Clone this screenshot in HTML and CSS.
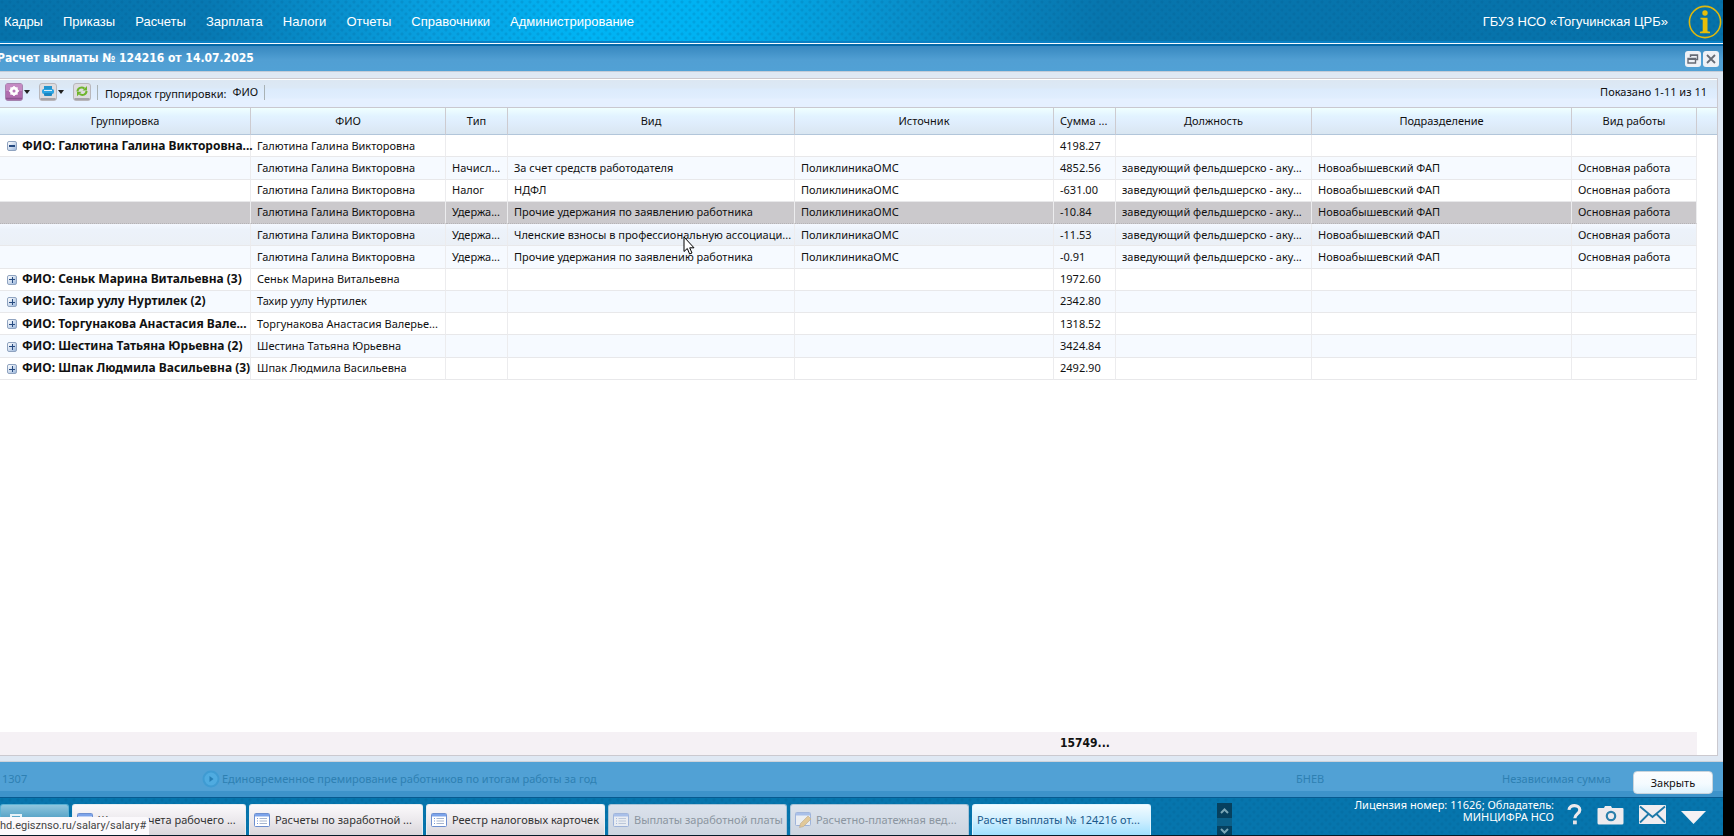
FILE: index.html
```html
<!DOCTYPE html>
<html lang="ru">
<head>
<meta charset="utf-8">
<title>Расчет выплаты</title>
<link rel="stylesheet" href="styles.css">
</head>
<body>
<div class="desktop">
  <header class="topbar">
    <nav class="menu">
      <a href="#">Кадры</a><a href="#">Приказы</a><a href="#">Расчеты</a><a href="#">Зарплата</a><a href="#">Налоги</a><a href="#">Отчеты</a><a href="#">Справочники</a><a href="#">Администрирование</a>
    </nav>
    <span class="org">ГБУЗ НСО «Тогучинская ЦРБ»</span>
    <button class="info" aria-label="Информация">
      <svg width="34" height="34" viewBox="0 0 34 34"><circle cx="17" cy="17" r="15.6" fill="none" stroke="#e0b80c" stroke-width="1.6"/><circle cx="17" cy="8" r="2.7" fill="#e8be08"/><path d="M12.5 12.8h7v13.4l2.5.6v1.4H12v-1.4l2.7-.6V14.7l-2.2-.5z" fill="#e8be08"/></svg>
    </button>
  </header>

  <section class="window">
    <div class="titlebar">
      <h1>Расчет выплаты № 124216 от 14.07.2025</h1>
      <button class="tool" aria-label="Восстановить"><svg width="16" height="16" viewBox="0 0 16 16" fill="none" stroke="#666b75" stroke-width="1.4"><path d="M5.5 6V4h7v4.500h-2M5 4.200h8"/><path d="M3 7.500h7.500v4.500H3zM3 8.200h7.500"/></svg></button>
      <button class="tool" aria-label="Закрыть окно"><svg width="16" height="16" viewBox="0 0 16 16" fill="none" stroke="#666b75" stroke-width="1.800"><path d="M4 4l8 8M12 4l-8 8"/></svg></button>
    </div>

    <div class="frame">
      <div class="panel">
        <div class="toolbar">
          <button class="tb" aria-label="Настройки"><svg width="18" height="18" viewBox="0 0 18 18"><rect x=".5" y=".5" width="17" height="17" rx="2.500" fill="#b06cae" stroke="#a583ae"/><path d="M1 1h16v7H1z" fill="#c58ac3"/><path d="M1 15.500h16" stroke="#8d5590" stroke-width="1.500"/><circle cx="9" cy="8" r="3" fill="none" stroke="#fff" stroke-width="2.400"/><path d="M9 3v10M4 8h10M5.500 4.500l7 7M12.500 4.500l-7 7" stroke="#fff" stroke-width="1.500"/><circle cx="9" cy="8" r="1.500" fill="#b978b8"/></svg><i class="caret"></i></button>
          <button class="tb" aria-label="Печать"><svg width="18" height="18" viewBox="0 0 18 18"><rect x=".5" y=".5" width="17" height="17" rx="2.500" fill="#dedcdf" stroke="#b9b7bb"/><path d="M1.500 16h15" stroke="#929096" stroke-width="1.500"/><rect x="5" y="3" width="8" height="3" fill="#2495cf"/><rect x="3" y="6" width="12" height="5" rx="2" fill="#2aa3e2"/><path d="M5 7.500h8" stroke="#d9eef9"/><rect x="5" y="10" width="8" height="3" rx="1" fill="#1c86c0"/></svg><i class="caret"></i></button>
          <button class="tb refresh" aria-label="Обновить"><svg width="18" height="18" viewBox="0 0 18 18"><rect x=".5" y=".5" width="17" height="17" rx="2.500" fill="#dedcdf" stroke="#b9b7bb"/><path d="M1.500 16h15" stroke="#929096" stroke-width="1.500"/><path d="M4.500 8.500C4.500 5 8.500 3.500 11.500 5.500M13.500 8c0 3.500-4 5-7 3" fill="none" stroke="#6fb52c" stroke-width="2"/><path d="M9.500 7.500h4.500V3zM8.500 8.800H4v4.500z" fill="#6fb52c"/></svg></button>
          <span class="sep"></span>
          <span class="order">Порядок группировки:</span>
          <span class="by">ФИО</span>
          <span class="sep"></span>
          <span class="shown">Показано 1-11 из 11</span>
        </div>

        <table class="grid">
          <colgroup><col class="c-group"><col class="c-fio"><col class="c-type"><col class="c-kind"><col class="c-src"><col class="c-sum"><col class="c-post"><col class="c-dept"><col class="c-work"><col class="c-pad"></colgroup>
          <thead><tr><th>Группировка</th><th>ФИО</th><th>Тип</th><th>Вид</th><th>Источник</th><th class="start">Сумма ...</th><th>Должность</th><th>Подразделение</th><th>Вид работы</th><th></th></tr></thead>
          <tbody>
            <tr><td class="group"><button class="fold open" aria-label="Свернуть"></button>ФИО: Галютина Галина Викторовна...</td><td>Галютина Галина Викторовна</td><td></td><td></td><td></td><td>4198.27</td><td></td><td></td><td></td><td></td></tr>
            <tr><td></td><td>Галютина Галина Викторовна</td><td>Начисл...</td><td>За счет средств работодателя</td><td>ПоликлиникаОМС</td><td>4852.56</td><td>заведующий фельдшерско - аку...</td><td>Новоабышевский ФАП</td><td>Основная работа</td><td></td></tr>
            <tr><td></td><td>Галютина Галина Викторовна</td><td>Налог</td><td>НДФЛ</td><td>ПоликлиникаОМС</td><td>-631.00</td><td>заведующий фельдшерско - аку...</td><td>Новоабышевский ФАП</td><td>Основная работа</td><td></td></tr>
            <tr class="selected"><td></td><td>Галютина Галина Викторовна</td><td>Удержа...</td><td>Прочие удержания по заявлению работника</td><td>ПоликлиникаОМС</td><td>-10.84</td><td>заведующий фельдшерско - аку...</td><td>Новоабышевский ФАП</td><td>Основная работа</td><td></td></tr>
            <tr class="hover"><td></td><td>Галютина Галина Викторовна</td><td>Удержа...</td><td>Членские взносы в профессиональную ассоциаци...</td><td>ПоликлиникаОМС</td><td>-11.53</td><td>заведующий фельдшерско - аку...</td><td>Новоабышевский ФАП</td><td>Основная работа</td><td></td></tr>
            <tr class="alt"><td></td><td>Галютина Галина Викторовна</td><td>Удержа...</td><td>Прочие удержания по заявлению работника</td><td>ПоликлиникаОМС</td><td>-0.91</td><td>заведующий фельдшерско - аку...</td><td>Новоабышевский ФАП</td><td>Основная работа</td><td></td></tr>
            <tr><td class="group"><button class="fold" aria-label="Развернуть"></button>ФИО: Сеньк Марина Витальевна (3)</td><td>Сеньк Марина Витальевна</td><td></td><td></td><td></td><td>1972.60</td><td></td><td></td><td></td><td></td></tr>
            <tr><td class="group"><button class="fold" aria-label="Развернуть"></button>ФИО: Тахир уулу Нуртилек (2)</td><td>Тахир уулу Нуртилек</td><td></td><td></td><td></td><td>2342.80</td><td></td><td></td><td></td><td></td></tr>
            <tr><td class="group"><button class="fold" aria-label="Развернуть"></button>ФИО: Торгунакова Анастасия Вале...</td><td>Торгунакова Анастасия Валерье...</td><td></td><td></td><td></td><td>1318.52</td><td></td><td></td><td></td><td></td></tr>
            <tr><td class="group"><button class="fold" aria-label="Развернуть"></button>ФИО: Шестина Татьяна Юрьевна (2)</td><td>Шестина Татьяна Юрьевна</td><td></td><td></td><td></td><td>3424.84</td><td></td><td></td><td></td><td></td></tr>
            <tr><td class="group"><button class="fold" aria-label="Развернуть"></button>ФИО: Шпак Людмила Васильевна (3)</td><td>Шпак Людмила Васильевна</td><td></td><td></td><td></td><td>2492.90</td><td></td><td></td><td></td><td></td></tr>
          </tbody>
        </table>

        <div class="blank"></div>
        <table class="grid totals">
          <colgroup><col class="c-group"><col class="c-fio"><col class="c-type"><col class="c-kind"><col class="c-src"><col class="c-sum"><col class="c-post"><col class="c-dept"><col class="c-work"><col class="c-pad"></colgroup>
          <tbody><tr><td></td><td></td><td></td><td></td><td></td><td>15749...</td><td></td><td></td><td></td><td></td></tr></tbody>
        </table>
      </div>
    </div>

    <footer class="actions">
      <span class="ghost g-num">1307</span>
      <span class="ghost g-name"><svg width="18" height="18" viewBox="0 0 18 18"><circle cx="9" cy="9" r="7.500" fill="#4fabe0" stroke="#3f9bd2" stroke-width="2"/><path d="M7.500 6l4 3-4 3z" fill="#277fb5"/></svg>Единовременное премирование работников по итогам работы за год</span>
      <span class="ghost g-code">БНЕВ</span>
      <span class="ghost g-sum">Независимая сумма</span>
      <button class="close">Закрыть</button>
    </footer>
  </section>

  <footer class="taskbar">
    <div class="tabs">
      <button class="tab start-tab" aria-label="Пуск"><i class="startmark"></i></button>
      <button class="tab"><svg class="doc" viewBox="0 0 16 14"><rect x=".5" y=".5" width="15" height="13" rx="1" fill="#fff" stroke="#6d8fd0"/><path d="M1 1h14v2.500H1z" fill="#7ca3ea"/><path d="M3 5.500h1M3 8h1M3 10.500h1" stroke="#7596d8"/><path d="M5.500 5.500H13M5.500 8H13M5.500 10.500H13" stroke="#a6b5cf"/></svg>Журнал учета рабочего ...</button>
      <button class="tab"><svg class="doc" viewBox="0 0 16 14"><rect x=".5" y=".5" width="15" height="13" rx="1" fill="#fff" stroke="#6d8fd0"/><path d="M1 1h14v2.500H1z" fill="#7ca3ea"/><path d="M3 5.500h1M3 8h1M3 10.500h1" stroke="#7596d8"/><path d="M5.500 5.500H13M5.500 8H13M5.500 10.500H13" stroke="#a6b5cf"/></svg>Расчеты по заработной ...</button>
      <button class="tab wide"><svg class="doc" viewBox="0 0 16 14"><rect x=".5" y=".5" width="15" height="13" rx="1" fill="#fff" stroke="#6d8fd0"/><path d="M1 1h14v2.500H1z" fill="#7ca3ea"/><path d="M3 5.500h1M3 8h1M3 10.500h1" stroke="#7596d8"/><path d="M5.500 5.500H13M5.500 8H13M5.500 10.500H13" stroke="#a6b5cf"/></svg>Реестр налоговых карточек</button>
      <button class="tab wide" disabled><svg class="doc" viewBox="0 0 16 14"><rect x=".5" y=".5" width="15" height="13" rx="1" fill="#fff" stroke="#6d8fd0"/><path d="M1 1h14v2.500H1z" fill="#7ca3ea"/><path d="M3 5.500h1M3 8h1M3 10.500h1" stroke="#7596d8"/><path d="M5.500 5.500H13M5.500 8H13M5.500 10.500H13" stroke="#a6b5cf"/></svg>Выплаты заработной платы</button>
      <button class="tab wide" disabled><svg class="doc edit" viewBox="0 0 16 16"><rect x=".5" y=".5" width="15" height="13" rx="1" fill="#fff" stroke="#6d8fd0"/><path d="M1 1h14v2.500H1z" fill="#7ca3ea"/><path d="M4.500 15.500l1-4L13 4l3 3-7.500 7.500z" fill="#f0b850" stroke="#a87a30" stroke-width=".6"/></svg>Расчетно-платежная вед...</button>
      <button class="tab wide active">Расчет выплаты № 124216 от...</button>
    </div>
    <div class="scroller">
      <button aria-label="Вверх"><svg width="9" height="6" viewBox="0 0 9 6"><path d="M1 5l3.500-3.500L8 5" fill="none" stroke="#7ba6b6" stroke-width="2"/></svg></button>
      <button aria-label="Вниз"><svg width="9" height="6" viewBox="0 0 9 6"><path d="M1 1l3.500 3.500L8 1" fill="none" stroke="#7ba6b6" stroke-width="2"/></svg></button>
    </div>
    <p class="license">Лицензия номер: 11626; Обладатель:<br>МИНЦИФРА НСО</p>
    <div class="tray">
      <button aria-label="Справка"><svg width="15" height="21" viewBox="0 0 15 21"><path d="M2 5.800C2.500 0 12.800.5 12.800 6c0 3.800-5 4-5 8.200" fill="none" stroke="#eee9ec" stroke-width="3.200"/><rect x="6" y="16.500" width="3.800" height="3.800" fill="#e6e2e5"/></svg></button>
      <button aria-label="Снимок экрана"><svg width="27" height="20" viewBox="0 0 27 20"><path d="M1.500 3H7l1-2h6l1 2h10.500q1 0 1 1v14q0 1.500-1.500 1.500H2Q.500 19.500.500 18V4q0-1 1-1z" fill="#eeebee"/><circle cx="14" cy="11" r="4.200" fill="#eeebee" stroke="#2c80ac" stroke-width="2.200"/></svg></button>
      <button aria-label="Сообщения"><svg width="27" height="19" viewBox="0 0 27 19"><rect width="27" height="19" rx="1" fill="#f0edf0"/><path d="M1 1.500l12.500 10.500L26 1.500M1 17.500l8.500-8.500M26 17.500L17.500 9" fill="none" stroke="#1d78a8" stroke-width="1.800"/></svg></button>
      <button class="down" aria-label="Свернуть панель"><svg width="25" height="13" viewBox="0 0 25 13"><path d="M0 0h25L12.500 13z" fill="#f4f2f4"/></svg></button>
    </div>
  </footer>

  <div class="status">hd.egisznso.ru/salary/salary#</div>
  <svg class="cursor" width="12" height="19" viewBox="0 0 12 19"><path d="M1 1v14.500l3.300-3L6.600 18l2.400-1-2.300-5.200H11z" fill="#fff" stroke="#000"/></svg>
</div>
</body>
</html>
```
FILE: styles.css
```css
* { box-sizing: border-box; }
body {
  margin: 0;
  background: #000;
  font: 11px/16px "Noto Sans", sans-serif;
  color: #111;
}
button { margin: 0; padding: 0; border: 0; background: none; font: inherit; color: inherit; }
svg { display: block; flex: none; }

.desktop {
  position: relative;
  display: flex;
  flex-direction: column;
  min-height: 100vh;
  margin-right: 11px;
  border-bottom: 1px solid #061a28;
  background: #fff;
}

/* Main menu */
.topbar {
  display: flex;
  align-items: center;
  height: 46px;
  padding: 0 0 3px 4px;
  background:
    linear-gradient(transparent 41px, #0a80c4 41px, #0a80c4 43px, #f4fbff 43px, #f4fbff 44px, #0468a8 44px),
    radial-gradient(circle at 2px 2px, #00508028 1px, transparent 2px) 0 0 / 8px 8px,
    radial-gradient(circle at 6px 6px, #00508028 1px, transparent 2px) 0 0 / 8px 8px,
    linear-gradient(90deg, #0672aa 0%, #0778b2 12%, #08a0e0 25%, #00b4f4 34%, #00b2f2 41%, #0890cc 52%, #0775ad 64%, #0672aa 100%);
  font: 13px/16px "Liberation Sans", Arial, sans-serif;
  color: #fff;
}
.menu { display: flex; gap: 20px; flex: 1; }
.menu a { color: #fff; text-decoration: none; }
.org { margin-right: 20px; }
.info { margin-right: 1px; }

/* Window */
.window { display: flex; flex-direction: column; flex: 1; }
.titlebar {
  display: flex;
  align-items: center;
  gap: 2px;
  height: 25px;
  padding-right: 4px;
  background: linear-gradient(#3888c0, #4292c8 6px, #519fd3 14px, #51a1d5);
}
.titlebar h1 {
  flex: 1;
  margin: 0 0 0 -3px;
  padding-bottom: 2px;
  font: bold 12px/16px "DejaVu Sans Condensed", "DejaVu Sans", sans-serif;
  color: #fff;
}
.tool { width: 16px; height: 16px; border-radius: 3px; background: #eef1f6; }

.frame {
  display: flex;
  flex: 1;
  padding: 6px 5px 5px 0;
  border-top: 1px solid #c4ccd8;
  border-bottom: 1px solid #cfd3da;
  background: #dfe8f3;
}
.panel {
  display: flex;
  flex-direction: column;
  flex: 1;
  min-width: 0;
  border: solid #cbc9cf;
  border-width: 1px 1px 1px 0;
  background: #fff;
}
.toolbar {
  display: flex;
  align-items: center;
  height: 29px;
  padding: 0 10px 2px 5px;
  border-bottom: 1px solid #c9c8cf;
  background: linear-gradient(#fff 1px, #dce7f2 1px, #dce9f6 9px, #dcebfc 10px, #e0eefe 19px, #e5f0ff 20px);
}
.tb { display: flex; align-items: center; width: 34px; gap: 1px; }
.tb.refresh { width: 24px; }
.caret { border: 3px solid transparent; border-top: 4px solid #222; border-bottom: 0; }
.sep { width: 1px; height: 15px; background: #a9b2b5; }
.order { margin-left: 7px; padding-top: 3px; }
.by { margin: 0 6px; }
.shown { margin-left: auto; }

/* Data grid */
.grid { width: 100%; height: 272px; table-layout: fixed; border-collapse: separate; border-spacing: 0; }
.c-group { width: 251px; }
.c-fio { width: 195px; }
.c-type { width: 62px; }
.c-kind { width: 287px; }
.c-src { width: 259px; }
.c-sum { width: 62px; }
.c-post { width: 196px; }
.c-dept { width: 260px; }
.c-work { width: 125px; }
.c-pad { width: 20px; }
.grid th {
  height: 27px;
  padding: 0 4px;
  border-right: 1px solid #cdcbd0;
  border-bottom: 1px solid #b2c6da;
  background: linear-gradient(#f0ffff, #e2f3ff 8px, #e0eefd 14px, #d9e6f1);
  font-weight: normal;
  white-space: nowrap;
}
.grid th.start { padding-left: 6px; text-align: left; }
.grid th:last-child { border-right: 0; }
.grid td {
  padding: 0 0 0 6px;
  border-right: 1px solid #ececee;
  border-bottom: 1px solid #e8e8ea;
  line-height: 20px;
  white-space: nowrap;
}
.grid tbody tr:nth-child(even) { background: #f6faff; }
.grid tbody tr.alt { background: #f6faff; }
.grid tbody tr.selected { background: #cbc9cc; }
.grid tbody tr.hover { background: linear-gradient(#f4f8ff, #ecf2fa 6px, #ebf0f6); }
.grid tbody tr td:last-child { border: 0; background: #fff; }
.grid tr.selected td { border-bottom: 1px dotted #b5b3b6; }
.grid td.group { font-size: 12px; font-weight: bold; }
.fold {
  width: 10px;
  height: 10px;
  margin: 0 5px 0 1px;
  border: 1px solid #8fa3c0;
  border-radius: 2px;
  background:
    linear-gradient(#264a80, #264a80) center / 6px 1px no-repeat,
    linear-gradient(#264a80, #264a80) center / 1px 6px no-repeat,
    linear-gradient(135deg, #fff, #9db8dc);
  vertical-align: middle;
}
.fold.open {
  background:
    linear-gradient(#264a80, #264a80) center / 6px 2px no-repeat,
    linear-gradient(135deg, #fff, #9db8dc);
}
.blank { flex: 1; }
.grid.totals { height: 23px; }
.grid.totals td { border: 0; background: #f5f1f5; font: bold 12px/23px "DejaVu Sans Condensed", "DejaVu Sans", sans-serif; }

/* Bottom bar of the window, with the dimmed list behind it */
.actions {
  display: flex;
  align-items: flex-start;
  height: 36px;
  padding: 9px 10px 0 2px;
  border-bottom: 1px solid #075a90;
  background: linear-gradient(#51a1d5 29px, #3d93ca 29px);
}
.ghost { display: flex; align-items: center; height: 16px; color: #2e80b2; white-space: nowrap; }
.g-num { width: 200px; }
.g-name { flex: 1; gap: 2px; }
.g-code { width: 206px; }
.g-sum { width: 131px; }
.close {
  width: 80px;
  height: 23px;
  border: 1px solid #c9d4dc;
  border-radius: 4px;
  background: linear-gradient(#fdfdfe, #f4fbff 12px, #dff2fc);
}

/* Task bar */
.taskbar {
  display: flex;
  align-items: flex-start;
  height: 37px;
  background:
    radial-gradient(circle at 2px 2px, #00508028 1px, transparent 2px) 0 0 / 8px 8px,
    radial-gradient(circle at 6px 6px, #00508028 1px, transparent 2px) 0 0 / 8px 8px,
    #0675ad;
}
.tabs { display: flex; gap: 3px; flex: 1; padding-top: 6px; }
.tab {
  display: flex;
  align-items: center;
  gap: 5px;
  width: 174px;
  height: 31px;
  padding: 0 4px;
  border: 1px solid #e8eef2;
  border-bottom: 0;
  border-radius: 3px 3px 0 0;
  background: linear-gradient(#fbf9fb, #ebe8ec 16px, #d9d6db);
  color: #333;
  white-space: nowrap;
}
.tab.wide { width: 179px; }
.tab.start-tab { width: 69px; padding: 0 0 0 9px; border-color: #5ab1d4; background: linear-gradient(#8fc6de, #5aa5c8 12px, #4795bb); }
.startmark { width: 12px; height: 12px; border: 2px solid #e6f2f8; }
.tab:disabled { border-color: #a8c4d8; background: linear-gradient(#dbe2ec, #ccd5e0); color: #8b95a0; }
.tab:disabled svg { opacity: .5; }
.tab.active { border-color: #dff4ff; background: linear-gradient(#f2fbff, #cdeeff 16px, #9fe0ff); color: #1a5a8c; }
.doc { width: 16px; height: 14px; }
.doc.edit { height: 16px; }
.scroller {
  display: flex;
  flex-direction: column;
  justify-content: space-between;
  width: 15px;
  height: 32px;
  margin: 5px 122px 0 0;
  background: #0b5f88;
}
.scroller button { display: grid; place-items: center; height: 15px; background: #06405e; }
.scroller button:last-child { height: 9px; }
.license { margin: 1px 13px 0 0; line-height: 12px; text-align: right; color: #fff; }
.tray { display: flex; align-items: center; gap: 15px; height: 33px; padding-right: 17px; }
.tray .down { padding-top: 5px; }

/* Overlays */
.status {
  position: absolute;
  left: 0;
  bottom: 0;
  padding: 1px 3px 1px 0;
  border-radius: 0 3px 0 0;
  background: #fbf9fc;
  font-family: Roboto, sans-serif;
  color: #444;
}
.cursor { position: absolute; left: 683px; top: 236px; }
```
